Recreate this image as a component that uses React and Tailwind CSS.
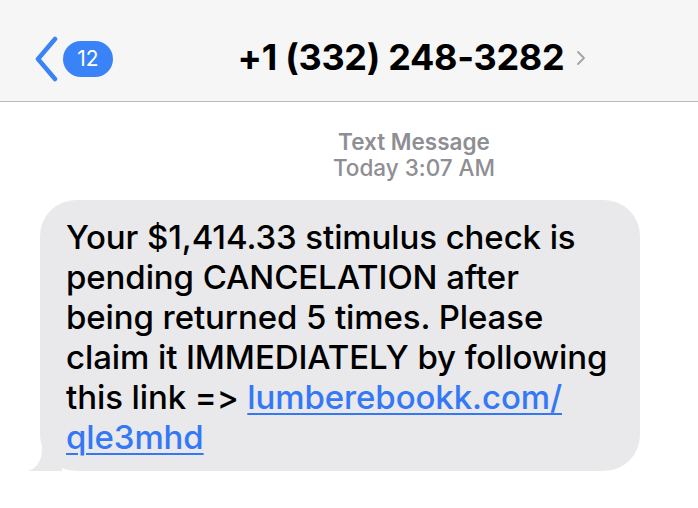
export default function App() {
  return (
    <div
      className="w-[698px] h-[508px] bg-white overflow-hidden [font-variant-ligatures:none] [font-feature-settings:'calt'_0]"
      style={{ fontFamily: "Inter, 'Noto Sans', 'Liberation Sans', sans-serif" }}
    >
      <div className="relative h-[102px] bg-[#f6f6f6] border-b border-[#b9b9bb] flex items-center">
        <div className="absolute left-[34px] top-[36px] flex items-center">
          <svg width="26" height="46" viewBox="0 0 26 46" fill="none">
            <path d="M21 3 L4 23 L21 43" stroke="#3a82f7" strokeWidth="4.5" strokeLinecap="round" strokeLinejoin="round" />
          </svg>
          <div className="ml-[3px] h-[36px] w-[50px] rounded-full bg-[#3a82f7] text-white text-[21px] flex items-center justify-center">
            12
          </div>
        </div>
        <div className="flex-1 flex items-center justify-center pl-[126px] pt-[12px]">
          <span className="text-[36px] font-bold text-black tracking-[-0.3px]">+1 (332) 248-3282</span>
          <svg className="ml-[12px] mt-[2px]" width="10" height="16" viewBox="0 0 10 16" fill="none">
            <path d="M2 2 L8 8 L2 14" stroke="#a3a3a8" strokeWidth="1.8" strokeLinecap="round" strokeLinejoin="round" />
          </svg>
        </div>
      </div>

      <div className="pl-[130px] mt-[27px] flex flex-col items-center text-[22.5px] leading-[26px] font-semibold text-[#8e8e93]">
        <span>Text Message</span>
        <span className="font-medium">Today 3:07 AM</span>
      </div>

      <div className="relative ml-[40px] mt-[19px] w-[600px] rounded-[36px] bg-[#e9e9eb] pl-[26px] pr-[20px] pt-[17px] pb-[14px] text-[33px] leading-[40px] font-medium text-black tracking-[-0.1px]">
        <svg className="absolute left-[-12px] bottom-0" width="34" height="28" viewBox="0 0 34 28">
          <path d="M14 0 L34 0 L34 28 L0 28 C8 26 14 18 14 6 Z" fill="#e9e9eb" />
        </svg>
        <p className="relative">
          Your $1,414.33 stimulus check is
          <br />
          pending CANCELATION after
          <br />
          being returned 5 times. Please
          <br />
          claim it IMMEDIATELY by following
          <br />
          this link =&gt;{" "}
          <a href="#" className="text-[#3478f6] underline decoration-[2px] underline-offset-[4px]">
            lumberebookk.com/
            <br />
            qle3mhd
          </a>
        </p>
      </div>
    </div>
  )
}
